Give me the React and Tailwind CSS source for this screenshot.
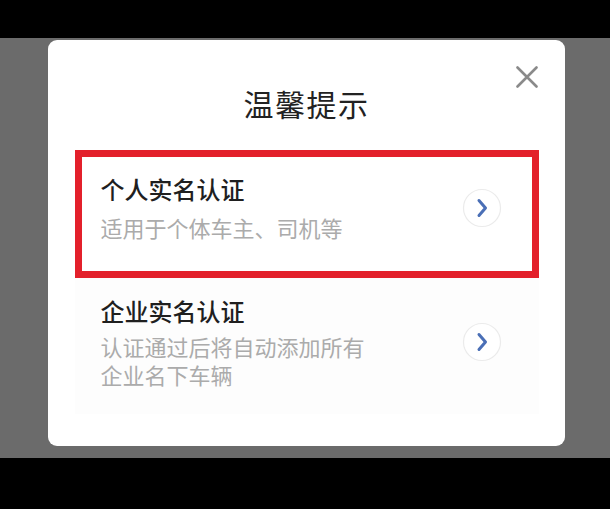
import React from "react";

const Chevron = () => (
  <svg width="40" height="40" viewBox="0 0 40 40" className="shrink-0">
    <circle cx="20" cy="20" r="18.5" fill="#ffffff" stroke="#ebebeb" strokeWidth="1.2" />
    <path
      d="M17 12.5 L23.5 20 L17 27.5"
      fill="none"
      stroke="#4a6fb6"
      strokeWidth="3"
      strokeLinecap="round"
      strokeLinejoin="round"
    />
  </svg>
);

const items = [
  {
    title: "个人实名认证",
    lines: ["适用于个体车主、司机等"],
  },
  {
    title: "企业实名认证",
    lines: ["认证通过后将自动添加所有", "企业名下车辆"],
  },
];

const App = () => {
  return (
    <div
      className="w-[610px] h-[509px] bg-black flex flex-col overflow-hidden"
      style={{ fontFamily: '"Noto Sans CJK SC", "Noto Sans", sans-serif' }}
    >
      <div className="h-[38px] shrink-0" />

      <div className="h-[420px] shrink-0 bg-[#6b6b6b] pl-[48px] pt-[2px]">
        <div className="relative w-[517px] h-[406px] bg-white rounded-[9px] flex flex-col items-center">
          {/* close */}
          <button className="absolute right-[27px] top-[26px] w-[22px] h-[22px]">
            <svg width="22" height="22" viewBox="0 0 22 22">
              <path
                d="M1.5 1.5 L20.5 20.5 M20.5 1.5 L1.5 20.5"
                stroke="#8a8a8a"
                strokeWidth="2.6"
                strokeLinecap="round"
              />
            </svg>
          </button>

          <h2 className="pt-[45px] text-[30px] leading-[36px] text-[#222] tracking-[1.5px]">
            温馨提示
          </h2>

          <div className="mt-[29px] w-[464px] flex flex-col">
            {/* personal */}
            <div className="border-[7px] border-[#e3202b] pl-[19px] pr-[30px] pt-[17px] pb-[30px] flex items-center justify-between">
              <div className="flex flex-col gap-[10px]">
                <div className="text-[24px] leading-[30px] font-medium text-[#1f1f1f]">
                  {items[0].title}
                </div>
                <div className="text-[22px] leading-[27px] text-[#ababab]">
                  {items[0].lines[0]}
                </div>
              </div>
              <Chevron />
            </div>

            {/* business */}
            <div className="border-[7px] border-transparent pl-[19px] pr-[30px] pt-[11px] pb-[19px] flex items-center justify-between bg-[#fdfdfd]">
              <div className="flex flex-col gap-[6px]">
                <div className="text-[24px] leading-[30px] font-medium text-[#1f1f1f]">
                  {items[1].title}
                </div>
                <div className="flex flex-col text-[22px] leading-[28px] text-[#ababab]">
                  {items[1].lines.map((l) => (
                    <span key={l}>{l}</span>
                  ))}
                </div>
              </div>
              <Chevron />
            </div>
          </div>
        </div>
      </div>

      <div className="flex-1" />
    </div>
  );
};

export default App;
